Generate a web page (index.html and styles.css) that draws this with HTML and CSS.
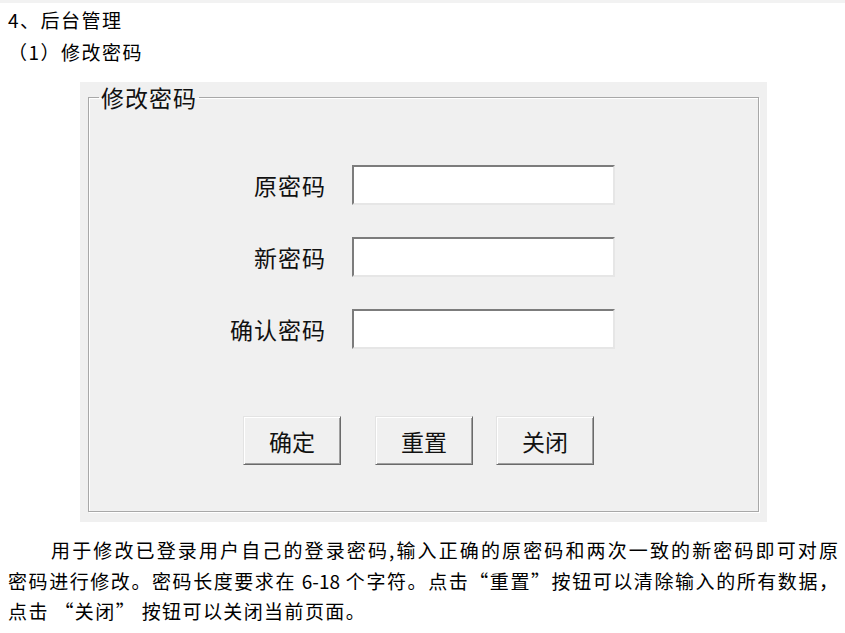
FILE: index.html
```html
<!DOCTYPE html>
<html lang="zh-CN">
<head>
    <meta charset="UTF-8">
    <meta name="viewport" content="width=device-width, initial-scale=1.0">
    <title>后台管理</title>
    <link rel="stylesheet" href="styles.css">
</head>
<body>
    <div class="doc">
        <p class="heading">4、后台管理</p>
        <p class="heading">（1）修改密码</p>

        <div class="shot">
            <fieldset class="group">
                <legend>修改密码</legend>
                <form class="pwd-form">
                    <label for="old-pwd">原密码</label>
                    <input type="password" id="old-pwd">
                    <label for="new-pwd">新密码</label>
                    <input type="password" id="new-pwd">
                    <label for="confirm-pwd">确认密码</label>
                    <input type="password" id="confirm-pwd">
                </form>
                <div class="buttons">
                    <button type="button" class="btn btn-ok">确定</button>
                    <button type="button" class="btn">重置</button>
                    <button type="button" class="btn">关闭</button>
                </div>
            </fieldset>
        </div>

        <p class="desc">
            <span class="line first">用于修改已登录用户自己的登录密码,输入正确的原密码和两次一致的新密码即可对原</span>
            <span class="line">密码进行修改。密码长度要求在 6-18 个字符。点击“重置”按钮可以清除输入的所有数据，</span>
            <span class="last">点击 “关闭” 按钮可以关闭当前页面。</span>
        </p>
    </div>
</body>
</html>
```

FILE: styles.css
```css
body {
    margin: 0;
    background: #fff;
    color: #000;
    font-family: "Noto Sans CJK SC", "Liberation Sans", sans-serif;
    border-top: 3px solid #f2f2f2;
}
.doc {
    padding: 1px 7px 0 8px;
}
.heading {
    margin: 0;
    font-size: 19px;
    line-height: 32px;
    letter-spacing: 1.5px;
}
.shot {
    margin: 14px 0 0 72px;
    width: 687px;
    height: 440px;
    background: #f0f0f0;
    padding: 0 8px 10px 8px;
    box-sizing: border-box;
    display: flex;
}
.group {
    flex: 1;
    margin: 0;
    padding: 0;
    border: 1px solid #a8a8a8;
    box-shadow: 1px 1px 0 #fff, inset 1px 1px 0 #fff;
}
.group legend {
    margin-left: 10px;
    padding: 0 2px;
    font-size: 23px;
    line-height: 30px;
    letter-spacing: 1px;
    color: #111;
}
.pwd-form {
    display: grid;
    grid-template-columns: 120px 263px;
    column-gap: 26px;
    row-gap: 32px;
    align-items: center;
    padding: 53px 0 0 117px;
}
.pwd-form label {
    text-align: right;
    font-size: 23px;
    letter-spacing: 1px;
    color: #111;
}
.pwd-form input {
    height: 40px;
    box-sizing: border-box;
    border: 2px solid;
    border-color: #7c7c7c #e6e6e6 #e6e6e6 #7c7c7c;
    background: #fff;
    outline: none;
}
.buttons {
    display: flex;
    gap: 23px;
    padding: 67px 0 0 154px;
}
.btn {
    width: 98px;
    height: 49px;
    background: #f0f0f0;
    border: 1px solid;
    border-color: #e3e3e3 #6a6a6a #6a6a6a #e3e3e3;
    box-shadow: inset 1px 1px 0 #fff, inset -1px -1px 0 #a0a0a0;
    font-family: "Noto Sans CJK SC", sans-serif;
    font-size: 23px;
    color: #111;
    padding: 0;
}
.btn-ok {
    margin-right: 11px;
}
.desc {
    margin: 13px 0 0;
    font-size: 19px;
    line-height: 30.5px;
}
.desc .line {
    display: block;
    text-align: justify;
    text-align-last: justify;
}
.desc .first {
    text-indent: 43px;
}
.desc .last {
    letter-spacing: 1.4px;
}
```
